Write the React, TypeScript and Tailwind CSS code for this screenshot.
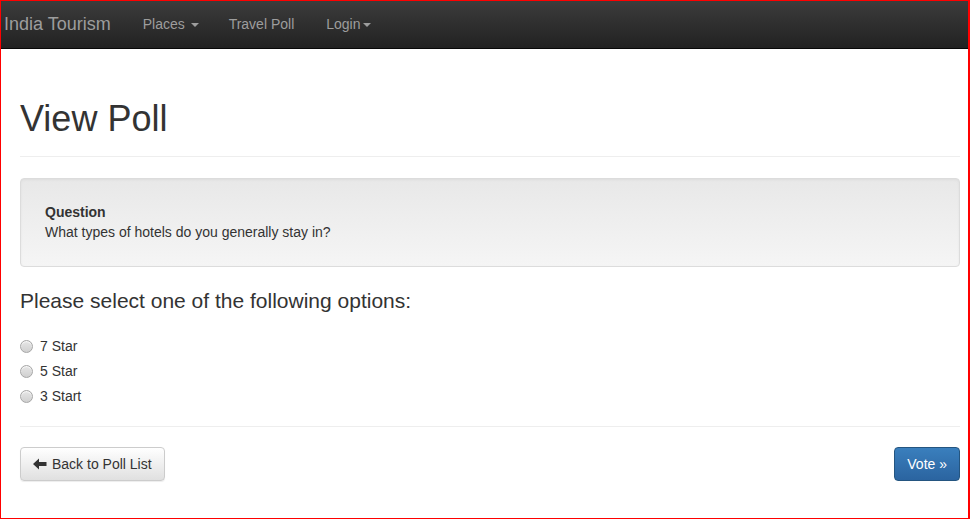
import React from 'react';

const Caret = () => (
  <span className="inline-block ml-[2px] align-middle w-0 h-0 border-x-[4px] border-x-transparent border-t-[4px] border-t-[#9d9d9d]" />
);

const Radio = () => (
  <span className="inline-block w-[13px] h-[13px] rounded-full border border-[#a6a6a6] bg-gradient-to-b from-[#e6e6e6] to-[#d0d0d0] shadow-[inset_0_1px_1px_rgba(255,255,255,0.8)]" />
);

export default function App() {
  const options = ['7 Star', '5 Star', '3 Start'];

  return (
    <div className="w-[970px] h-[519px] border-l border-t border-b border-r-2 border-[#ff0000] bg-white text-[#333] font-['Liberation_Sans',Arial,sans-serif] text-[14px] overflow-hidden">
      {/* Navbar */}
      <nav className="h-[48px] bg-gradient-to-b from-[#3c3c3c] to-[#222222] border-b border-[#080808] flex items-center text-[#9d9d9d]">
        <span className="text-[18px] ml-[3px] mr-[32px]">India Tourism</span>
        <span className="mr-[30px]">
          Places <Caret />
        </span>
        <span className="mr-[32px]">Travel Poll</span>
        <span>
          Login
          <Caret />
        </span>
      </nav>

      {/* Content */}
      <div className="pl-[19px] pr-[8px]">
        <div className="pt-[50px] pb-[17px] border-b border-[#eeeeee]">
          <h1 className="text-[36px] leading-[40px]">View Poll</h1>
        </div>

        <div className="mt-[21px] h-[89px] rounded-[4px] border border-[#dcdcdc] bg-gradient-to-b from-[#e8e8e8] to-[#f5f5f5] shadow-[inset_0_1px_3px_rgba(0,0,0,0.05)] px-[24px] py-[23px] text-[14px] leading-[20px]">
          <div className="font-bold">Question</div>
          <div>What types of hotels do you generally stay in?</div>
        </div>

        <h3 className="mt-[19px] text-[21px] leading-[30px]">Please select one of the following options:</h3>

        <div className="mt-[18px] flex flex-col">
          {options.map((o) => (
            <label key={o} className="flex items-center h-[25px] gap-[7px]">
              <Radio />
              <span>{o}</span>
            </label>
          ))}
        </div>

        <div className="mt-[17px] border-b border-[#eeeeee]" />

        <div className="mt-[20px] flex justify-between">
          <button className="h-[34px] px-[12px] flex items-center gap-[5px] rounded-[4px] border border-[#cccccc] bg-gradient-to-b from-white to-[#e0e0e0] shadow-[0_1px_1px_rgba(0,0,0,0.075)] text-[#333]">
            <svg width="14" height="12" viewBox="0 0 14 12">
              <path d="M0 6 L6 0.5 L6 4 L13.5 4 L13.5 8 L6 8 L6 11.5 Z" fill="#333" />
            </svg>
            Back to Poll List
          </button>
          <button className="h-[34px] px-[12px] rounded-[4px] border border-[#245580] bg-gradient-to-b from-[#3a7fbd] to-[#2b64a0] text-white">
            Vote »
          </button>
        </div>
      </div>
    </div>
  );
}
